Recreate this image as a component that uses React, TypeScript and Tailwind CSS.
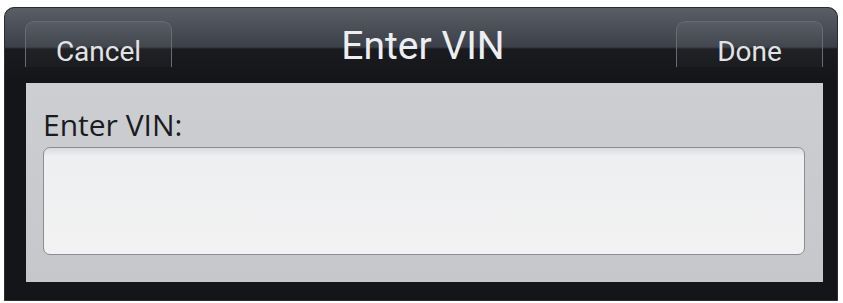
import React from 'react';

const HeaderButton: React.FC<{ label: string }> = ({ label }) => (
  <button
    type="button"
    className="w-[147px] h-[46px] rounded-t-[9px] border border-b-0 border-[#676b73] bg-[linear-gradient(to_bottom,rgba(255,255,255,0.06)_0px,rgba(255,255,255,0.03)_26px,rgba(255,255,255,0.02)_100%)] pt-[14px] text-center text-[28px] leading-none text-[#e2e3e6] [font-family:Roboto,'Liberation_Sans',sans-serif]"
  >
    {label}
  </button>
);

export default function App() {
  return (
    <div className="w-[843px] h-[303px] bg-white pt-[7px] pl-[4px] pr-[5px] pb-[2px]">
      <div className="flex h-full flex-col rounded-t-[10px] border border-[#2c2d31] bg-[#141519]">
        {/* Header */}
        <div className="relative h-[75px] shrink-0 rounded-t-[9px] bg-[linear-gradient(to_bottom,#5a5e67_0px,#4a4e57_20px,#3c4048_39px,#1a1b1f_41px,#141519_100%)]">
          <div className="flex justify-between pl-[20px] pr-[14px] pt-[13px]">
            <HeaderButton label="Cancel" />
            <HeaderButton label="Done" />
          </div>
          <div className="absolute inset-x-0 top-[19px] pl-[4px] text-center text-[39px] leading-none text-[#eceef1] [font-family:Roboto,'Liberation_Sans',sans-serif]">
            Enter VIN
          </div>
        </div>

        {/* Body */}
        <div className="ml-[21px] mr-[14px] h-[199px] shrink-0 bg-[linear-gradient(to_bottom,#cdced2_0px,#c6c7cb_100%)] px-[17px] pt-[27px] pr-[18px]">
          <div className="text-[30px] leading-none text-[#1a1b1e] [font-family:'Open_Sans','DejaVu_Sans',sans-serif]">
            Enter VIN:
          </div>
          <div className="mt-[7px] h-[108px] rounded-[7px] border border-[#8c8d91] bg-[linear-gradient(to_bottom,#d9dadc_0px,#eeeff0_8px,#f2f2f3_100%)]" />
        </div>
      </div>
    </div>
  );
}
